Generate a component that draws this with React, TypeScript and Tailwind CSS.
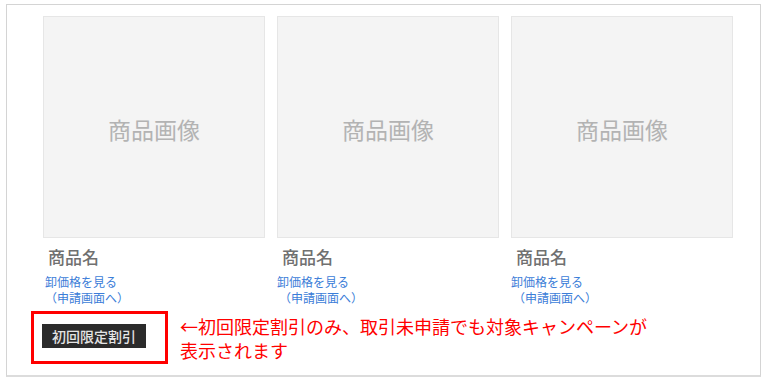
import React from 'react';

const jp = { fontFamily: '"Noto Sans CJK JP", "Noto Sans", sans-serif' };

const products = [1, 2, 3];

const App: React.FC = () => {
    return (
        <div className="w-[768px] h-[386px] bg-white pt-[4px] pl-[6px]" style={jp}>
            <div className="w-[755px] h-[373px] border border-[#d4d4d4] border-b-2 border-b-[#dcdcdc]">
                {/* product cards */}
                <div className="grid grid-cols-[222px_222px_222px] gap-x-[12px] pl-[36px] pt-[11px]">
                    {products.map((id) => (
                        <div key={id}>
                            <div className="h-[222px] bg-[#f4f4f4] border border-[#e6e6e6] flex items-center justify-center">
                                <span className="text-[23px] text-[#b3b3b3] mt-[4px]">商品画像</span>
                            </div>
                            <div className="mt-[7px] pl-[5px] text-[17px] leading-[24px] text-[#707070] font-medium">商品名</div>
                            <div className="mt-[5px] text-[12px] leading-[16px] text-[#3b7dd8]">
                                <div className={id === 1 ? 'pl-[2px]' : ''}>卸価格を見る</div>
                                <div className="pl-[2px]">（申請画面へ）</div>
                            </div>
                        </div>
                    ))}
                </div>

                {/* campaign note */}
                <div className="flex items-start pl-[24px] mt-[5px]">
                    <div className="w-[137px] h-[53px] border-[3px] border-[#ff0000] pl-[8px] pt-[9px]">
                        <div className="inline-flex items-center h-[24px] px-[10px] bg-[#2b2b2b] text-[14px] text-[#e4e4e4] font-medium leading-none">
                            初回限定割引
                        </div>
                    </div>
                    <div className="ml-[12px] mt-[3px] text-[18px] leading-[24px] text-[#ff0000]">
                        <div>←初回限定割引のみ、取引未申請でも対象キャンペーンが</div>
                        <div>表示されます</div>
                    </div>
                </div>
            </div>
        </div>
    );
};

export default App;
